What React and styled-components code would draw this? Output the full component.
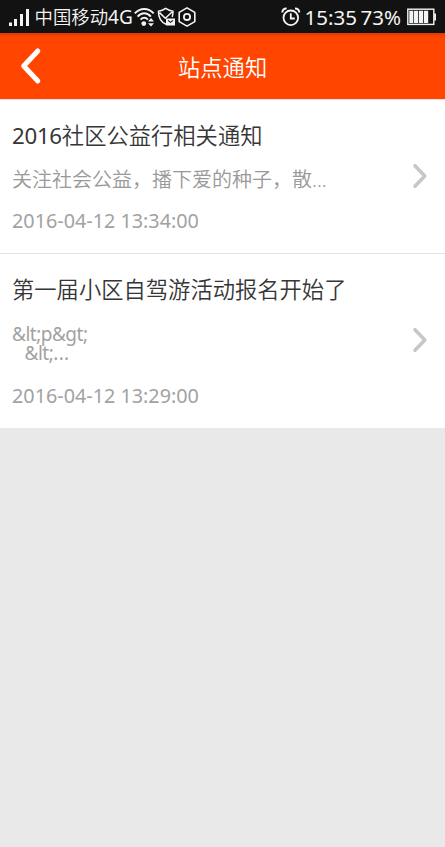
import React from "react";
import styled, { createGlobalStyle } from "styled-components";

const GlobalStyle = createGlobalStyle`
  * { box-sizing: border-box; }
  body {
    margin: 0;
    background: #e9e9e9;
    font-family: "Noto Sans", "Noto Sans CJK SC", sans-serif;
  }
`;

const Screen = styled.div`
  width: 100%;
  height: 847px;
  overflow: hidden;
  background: #e9e9e9;
`;

const StatusBar = styled.div`
  height: 33px;
  padding: 0 8px;
  display: flex;
  align-items: center;
  justify-content: space-between;
  background: #121212;
  color: #f4f4f4;
`;

const StatusGroup = styled.div`
  display: flex;
  align-items: center;
  height: 33px;
`;

const StatusText = styled.span`
  width: ${(p) => p.$width}px;
  margin-left: ${(p) => p.$gap}px;
  padding-top: ${(p) => p.$drop || 0}px;
  font-size: ${(p) => p.$size}px;
  font-weight: ${(p) => p.$weight || 400};
  line-height: 33px;
  white-space: nowrap;
`;

const StatusIcon = styled.svg`
  display: block;
  flex: none;
  margin-left: ${(p) => p.$gap || 0}px;
`;

const Header = styled.header`
  height: 66px;
  padding-left: 20px;
  display: grid;
  grid-template-columns: 158px 1fr;
  align-items: center;
  background: linear-gradient(#d93a00 0, #f74200 3px, #ff4500 6px);
`;

const BackButton = styled.button`
  width: 22px;
  height: 38px;
  padding: 0;
  border: 0;
  background: none;
  display: block;
`;

const PageTitle = styled.h1`
  margin: 0;
  padding-top: 3px;
  font-size: 22.3px;
  font-weight: 350;
  line-height: 30px;
  color: #fff;
`;

const List = styled.main`
  background: #fff;
`;

const Notice = styled.article`
  height: ${(p) => p.$height}px;
  padding: 0 17px 0 12px;
  display: flex;
  align-items: center;
  justify-content: space-between;
  border-top: 1px solid #e4e4e4;
`;

const NoticeBody = styled.div`
  align-self: flex-start;
  padding-top: 21px;
`;

const NoticeTitle = styled.h2`
  margin: 0;
  font-size: 22.3px;
  font-weight: 350;
  line-height: 30px;
  color: #363636;
  white-space: nowrap;
`;

const TitleYear = styled.span`
  font-weight: 400;
  letter-spacing: -0.3px;
`;

const Summary = styled.div`
  margin-top: ${(p) => p.$top}px;
  font-size: 20px;
  font-weight: 350;
  line-height: ${(p) => p.$line}px;
  color: #999;
  white-space: pre;
`;

const Markup = styled.span`
  display: block;
  padding-left: ${(p) => p.$indent || 0}px;
  font-size: 19px;
  font-weight: 400;
  letter-spacing: -0.5px;
  color: #a2a2a2;
`;

const Ellipsis = styled.span`
  letter-spacing: 0.3px;
`;

const DateText = styled.time`
  display: block;
  margin-top: ${(p) => p.$top}px;
  font-size: 19.8px;
  line-height: 26px;
  color: #a2a2a2;
`;

const Chevron = styled.svg`
  display: block;
  flex: none;
  margin-bottom: 2px;
`;

const notices = [
  {
    title: (
      <>
        <TitleYear>2016</TitleYear>社区公益行相关通知
      </>
    ),
    summary: "关注社会公益，播下爱的种子，散...",
    date: "2016-04-12 13:34:00",
    height: 154,
    summaryTop: 16,
    line: 26,
    dateTop: 15,
  },
  {
    title: "第一届小区自驾游活动报名开始了",
    summary: (
      <>
        <Markup>{"&lt;p&gt;"}</Markup>
        <Markup $indent={12.5}>
          {"&lt;"}
          <Ellipsis>...</Ellipsis>
        </Markup>
      </>
    ),
    date: "2016-04-12 13:29:00",
    height: 175,
    summaryTop: 20,
    line: 19,
    dateTop: 20,
  },
];

function SignalIcon() {
  return (
    <StatusIcon width="22" height="20" viewBox="0 0 22 20" fill="#f4f4f4">
      <rect x="1" y="15.5" width="3" height="3.5" />
      <rect x="6" y="12" width="3" height="7" />
      <rect x="12" y="7" width="3" height="12" />
      <rect x="18" y="2" width="3" height="17" />
    </StatusIcon>
  );
}

function WifiIcon() {
  return (
    <StatusIcon width="22" height="20" viewBox="0 0 22 20" fill="none" stroke="#f4f4f4" strokeWidth="2">
      <path d="M.8 6.4C6.3 .4 14.2 .4 19.7 6.4M3.6 9.6C7.6 5.2 12.9 5.2 16.9 9.6M6.6 12.6C8.9 10.2 11.6 10.2 13.9 12.6" />
      <circle cx="9.8" cy="16.6" r="2.4" fill="#f4f4f4" stroke="none" />
      <path d="M14 14.6 17 11l3 3.6zM14 16.2h6l-3 3.4z" fill="#f4f4f4" stroke="none" />
    </StatusIcon>
  );
}

function ShieldMailIcon() {
  return (
    <StatusIcon $gap={1} width="20" height="20" viewBox="0 0 20 20" fill="none" stroke="#f4f4f4" strokeWidth="1.5">
      <path d="M9 17.3C3.8 15 1.4 10 1.4 4.3 4 4 6.5 3 8.7 1.4 11 3 13.4 4 16 4.3 16 6.3 15.8 8.2 15.2 10M2.5 5.6l5.8 5.6 7-6.4" />
      <rect x="9" y="11.5" width="9" height="7" fill="#f4f4f4" stroke="none" />
      <path d="m11 13.4 2.5 2 2.5-2" stroke="#121212" strokeWidth="1.1" />
    </StatusIcon>
  );
}

function HexIcon() {
  return (
    <StatusIcon width="20" height="20" viewBox="0 0 20 20" fill="none" stroke="#f4f4f4" strokeWidth="1.6" strokeLinejoin="round">
      <path d="M10 .9 17.8 5.4v9.2L10 19.1 2.2 14.6V5.4z" />
      <circle cx="10" cy="9.9" r="3.1" strokeWidth="1.8" />
    </StatusIcon>
  );
}

function AlarmIcon() {
  return (
    <StatusIcon width="20" height="20" viewBox="0 0 20 20" fill="none" stroke="#f4f4f4" strokeWidth="1.8">
      <circle cx="9.8" cy="10.8" r="7.3" />
      <path d="M9.8 6.2v5.3h4" />
      <path d="M1.3 5.6C1.3 3 3 1.5 5.6 1.6M14 1.6c2.6-.1 4.3 1.4 4.3 4" strokeWidth="2" />
    </StatusIcon>
  );
}

function BatteryIcon() {
  return (
    <StatusIcon width="30" height="18" viewBox="0 0 30 18" fill="#f4f4f4">
      <rect x=".8" y="1.2" width="26" height="15.2" fill="none" stroke="#f4f4f4" strokeWidth="1.4" />
      <path d="M2.3 2.8h4v12.2h-4zM7 2.8h4.2v12.2H7zM12 2.8h4.2v12.2H12zM17 2.8h4.2v12.2H17zM27.2 5.5H29v7h-1.8z" />
    </StatusIcon>
  );
}

export default function App() {
  return (
    <Screen>
      <GlobalStyle />
      <StatusBar>
        <StatusGroup>
          <SignalIcon />
          <StatusText $gap={4.5} $width={99.5} $size={18.4} $weight={350}>
            中国移动<StatusText as="b" $gap={0} $size={19}>4G</StatusText>
          </StatusText>
          <WifiIcon />
          <ShieldMailIcon />
          <HexIcon />
        </StatusGroup>
        <StatusGroup>
          <AlarmIcon />
          <StatusText $gap={3.5} $width={56} $size={20.5} $drop={1}>15:35</StatusText>
          <StatusText $gap={0} $width={46.5} $size={20.5} $drop={1}>73%</StatusText>
          <BatteryIcon />
        </StatusGroup>
      </StatusBar>
      <Header>
        <BackButton aria-label="返回">
          <svg width="22" height="38" viewBox="0 0 22 38" fill="none" stroke="#fff" strokeWidth="5" strokeLinecap="round" strokeLinejoin="round">
            <path d="M17.8 4 3.7 19 17.8 34" />
          </svg>
        </BackButton>
        <PageTitle>站点通知</PageTitle>
      </Header>
      <List>
        {notices.map((n) => (
          <Notice key={n.date} $height={n.height}>
            <NoticeBody>
              <NoticeTitle>{n.title}</NoticeTitle>
              <Summary $top={n.summaryTop} $line={n.line}>{n.summary}</Summary>
              <DateText $top={n.dateTop}>{n.date}</DateText>
            </NoticeBody>
            <Chevron width="16" height="26" viewBox="0 0 16 26" fill="none" stroke="#c7c7cb" strokeWidth="3.6" strokeLinecap="round" strokeLinejoin="round">
              <path d="M3 2.7 12.8 13 3 23.3" />
            </Chevron>
          </Notice>
        ))}
      </List>
    </Screen>
  );
}
